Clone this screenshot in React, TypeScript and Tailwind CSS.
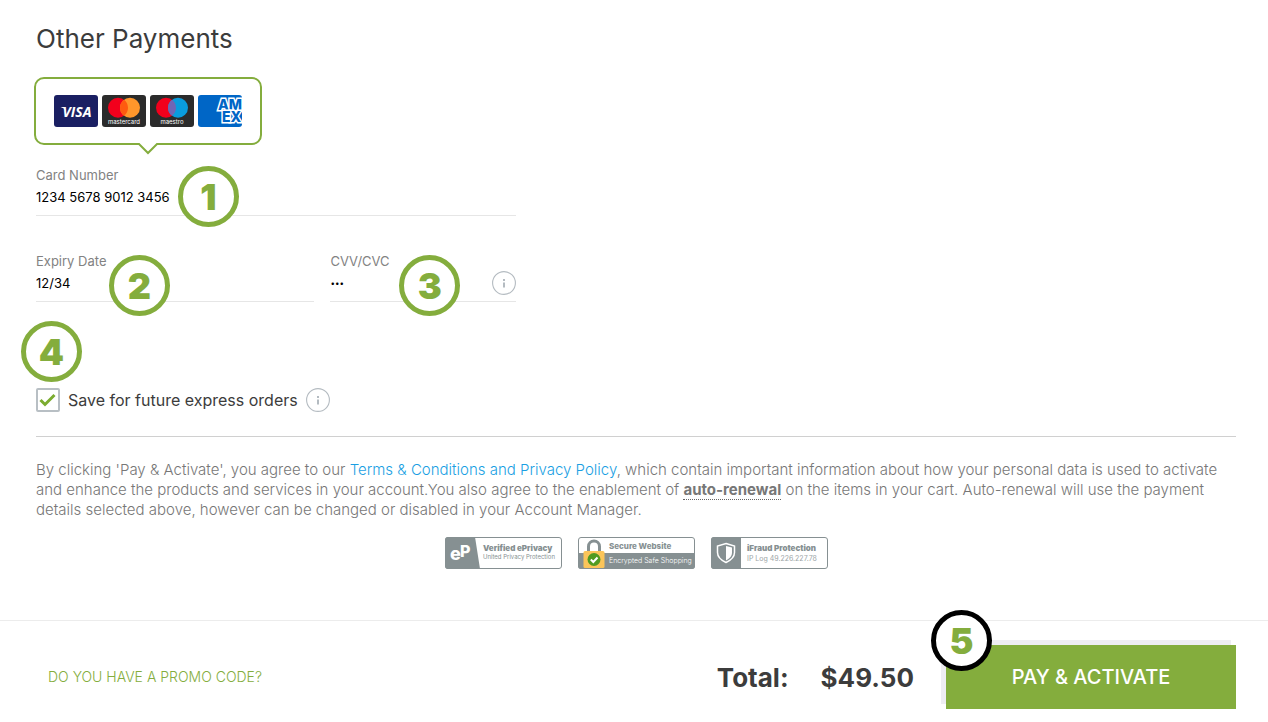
import React from 'react';
import clsx from 'clsx';

interface StepBadgeProps {
  step: number;
  dark?: boolean;
  className?: string;
}

/** Numbered ring that marks a step of the checkout */
const StepBadge: React.FC<StepBadgeProps> = ({ step, dark = false, className }) => (
  <span
    className={clsx(
      'pointer-events-none absolute z-10 flex size-[61px] items-center justify-center rounded-full border-[5px] bg-white text-4xl font-black text-[#84ad3d]',
      dark ? 'border-black' : 'border-[#84ad3d]',
      className
    )}
  >
    {step}
  </span>
);

interface FieldProps {
  id: string;
  label: string;
  value: string;
  type?: string;
  className?: string;
  children?: React.ReactNode;
}

const Field: React.FC<FieldProps> = ({ id, label, value, type = 'text', className, children }) => (
  <div className={clsx('relative', className)}>
    <label htmlFor={id} className="block text-[13px] leading-4 text-[#828282]">
      {label}
    </label>
    <input
      id={id}
      type={type}
      defaultValue={value}
      className={clsx(
        'block h-[33px] w-full border-b border-[#e6e6e6] bg-transparent pb-1 text-black outline-none',
        type === 'password' ? 'text-[8px]' : 'text-[13px]'
      )}
    />
    {children}
  </div>
);

const InfoButton: React.FC<{ label: string; className?: string }> = ({ label, className }) => (
  <button type="button" aria-label={label} className={clsx('size-6 text-[#b4bbc1]', className)}>
    <svg viewBox="0 0 24 24" className="size-6" fill="none">
      <circle cx="12" cy="12" r="11.4" stroke="currentColor" strokeWidth="1.1" />
      <path d="M11 8h2v2h-2zM11 11.5h2v5h-2z" fill="currentColor" />
    </svg>
  </button>
);

const CardLogos = () => (
  <>
    <svg viewBox="0 0 44 32" className="h-8 w-11">
      <rect width="44" height="32" rx="3" fill="#1a1f62" />
      <text x="23" y="22" textAnchor="middle" fontFamily="Open Sans, sans-serif" fontSize="14" fontWeight="700" fontStyle="italic" fill="#fff">
        VISA
      </text>
      <path d="M6.500 12h4l1.500 4q-1.500-3-5.500-4z" fill="#fff" />
    </svg>
    <svg viewBox="0 0 44 32" className="h-8 w-11">
      <rect width="44" height="32" rx="3" fill="#2b2b2b" />
      <circle cx="16" cy="12.700" r="10" fill="#f2001c" />
      <circle cx="28" cy="12.700" r="10" fill="#ff962b" />
      <path d="M22 4.700a10 10 0 0 1 0 16a10 10 0 0 1 0-16z" fill="#ff5a0f" />
      <text x="22" y="29" textAnchor="middle" fontFamily="Inter, sans-serif" fontSize="6" fill="#fff">
        mastercard
      </text>
    </svg>
    <svg viewBox="0 0 44 32" className="h-8 w-11">
      <rect width="44" height="32" rx="3" fill="#2b2b2b" />
      <circle cx="16" cy="12.700" r="10" fill="#f2001c" />
      <circle cx="28" cy="12.700" r="10" fill="#0a9cdd" />
      <path d="M22 4.700a10 10 0 0 1 0 16a10 10 0 0 1 0-16z" fill="#7066b5" />
      <text x="22" y="29" textAnchor="middle" fontFamily="Inter, sans-serif" fontSize="6" fill="#fff">
        maestro
      </text>
    </svg>
    <svg viewBox="0 0 44 32" className="h-8 w-11">
      <defs>
        <clipPath id="amex">
          <rect width="44" height="32" rx="3" />
        </clipPath>
      </defs>
      <g clipPath="url(#amex)" fontFamily="Inter, sans-serif" fontSize="14" fontWeight="800">
        <rect width="44" height="32" fill="#0066c6" />
        <text x="20" y="15" fill="#0066c6" stroke="#fff" strokeWidth="3" paintOrder="stroke">AM</text>
        <text x="24" y="27" fill="#0066c6" stroke="#fff" strokeWidth="3" paintOrder="stroke">EX</text>
      </g>
    </svg>
  </>
);

const PrivacySeal = () => (
  <svg viewBox="0 0 117 32" className="h-8 w-[117px]" fontFamily="Inter, sans-serif">
    <rect x=".5" y=".5" width="116" height="31" rx="2.500" fill="#fff" stroke="#869092" />
    <path d="M3 0h27l5 32H3a3 3 0 0 1-3-3V3a3 3 0 0 1 3-3z" fill="#869092" />
    <text x="5" y="23" fontSize="18" fontWeight="800" fill="#fff">e</text>
    <text x="15" y="20" fontSize="16" fontWeight="800" fill="#fff">P</text>
    <text x="38" y="14" fontSize="8" fontWeight="900" fill="#869092">Verified ePrivacy</text>
    <text x="38" y="22" fontSize="6" fill="#869092">United Privacy Protection</text>
  </svg>
);

const SecureSeal = () => (
  <svg viewBox="0 0 117 32" className="h-8 w-[117px]" fontFamily="Inter, sans-serif">
    <rect x=".5" y=".5" width="116" height="31" rx="2.500" fill="#fff" stroke="#869092" />
    <path d="M0 16h117v13a3 3 0 0 1-3 3H3a3 3 0 0 1-3-3z" fill="#869092" />
    <path d="M10.500 15V9.500a5.500 5.500 0 0 1 11 0V15" fill="none" stroke="#869092" strokeWidth="3" />
    <rect x="5.500" y="14" width="21" height="17" rx="1.500" fill="#fbc55a" />
    <circle cx="16" cy="22.500" r="6.500" fill="#519b22" />
    <path d="m12.800 22.500 2.500 2.500 4.200-4.500" fill="none" stroke="#fff" strokeWidth="2" />
    <text x="31" y="12" fontSize="8" fontWeight="800" fill="#869092">Secure Website</text>
    <text x="31" y="26" fontSize="7" fontWeight="300" fill="#fff">Encrypted Safe Shopping</text>
  </svg>
);

const FraudSeal = () => (
  <svg viewBox="0 0 117 32" className="h-8 w-[117px]" fontFamily="Inter, sans-serif">
    <rect x=".5" y=".5" width="116" height="31" rx="2.500" fill="#fff" stroke="#869092" />
    <path d="M3 0h27v32H3a3 3 0 0 1-3-3V3a3 3 0 0 1 3-3z" fill="#869092" />
    <path d="M15 6.500 23.500 9v6.500q0 6-8.500 10-8.500-4-8.500-10V9z" fill="none" stroke="#fff" strokeWidth="1.500" />
    <path d="M15 9 21 10.500v5.500q0 4-6 7.500z" fill="#fff" />
    <text x="36" y="14" fontSize="8" fontWeight="900" fill="#869092">iFraud Protection</text>
    <text x="36" y="24" fontSize="7" fill="#9da5a7">IP Log 49.226.227.78</text>
  </svg>
);

/**
 * Checkout payment step
 * Card form, terms, trust seals and the order total with its pay button
 */
export default function App() {
  return (
    <div className="bg-white font-['Inter',sans-serif] text-[#3c3c3c]">
      <main className="pt-[23px] pr-8 pl-9">
        <h1 className="text-[26px] leading-8">Other Payments</h1>

        {/* Accepted cards */}
        <div className="relative mt-[22px] -ml-0.5 flex w-fit gap-1 rounded-[10px] border-2 border-[#84ad3d] px-[18px] py-4">
          <CardLogos />
          <svg viewBox="0 0 20 12" className="absolute top-full left-1/2 h-3 w-5 -translate-x-1/2">
            <path d="M0 0h20L10 10z" fill="#fff" />
            <path d="M0 1h1l9 9 9-9h1" fill="none" stroke="#84ad3d" strokeWidth="2" />
          </svg>
        </div>

        {/* Card form */}
        <form className="mt-[22px] w-full max-w-[480px]">
          <Field id="card-number" label="Card Number" value="1234 5678 9012 3456">
            <StepBadge step={1} className="-top-px left-[142px]" />
          </Field>
          <div className="mt-[37px] flex gap-4">
            <Field id="expiry" label="Expiry Date" value="12/34" className="flex-3">
              <StepBadge step={2} className="top-0.5 left-[73px]" />
            </Field>
            <Field id="cvv" label="CVV/CVC" value="123" type="password" className="flex-2">
              <StepBadge step={3} className="top-0.5 left-[69px]" />
              <InfoButton label="About CVV/CVC" className="absolute top-[18px] right-0" />
            </Field>
          </div>
        </form>

        {/* Save card */}
        <div className="relative mt-[86px] flex items-center gap-2">
          <StepBadge step={4} className="-top-[67px] -left-[15px]" />
          <span className="relative size-6">
            <input
              id="save-card"
              type="checkbox"
              defaultChecked
              className="peer block size-6 appearance-none rounded-xs border-2 border-[#b8bfc4]"
            />
            <svg viewBox="0 0 24 24" className="pointer-events-none absolute inset-0 hidden size-6 peer-checked:block">
              <path d="m4.500 12 4.500 4.500L18.500 7" fill="none" stroke="#7bac2f" strokeWidth="3" />
            </svg>
          </span>
          <label htmlFor="save-card" className="text-base leading-6">
            Save for future express orders
          </label>
          <InfoButton label="About saved cards" />
        </div>

        {/* Terms */}
        <hr className="mt-6 border-[#d0d0d0]" />
        <p className="mt-[23px] text-[15px] leading-5 font-light text-[#777]">
          By clicking 'Pay &amp; Activate', you agree to our{' '}
          <a href="#terms" className="text-[#1a9fe3]">
            Terms &amp; Conditions and Privacy Policy
          </a>
          , which contain important information about how your personal data is used to activate and enhance the
          products and services in your account.You also agree to the enablement of{' '}
          <strong className="border-b border-dotted border-[#666] font-bold">auto-renewal</strong> on the items in your
          cart. Auto-renewal will use the payment details selected above, however can be changed or disabled in your
          Account Manager.
        </p>

        {/* Trust seals */}
        <div className="mt-[17px] flex justify-center gap-4">
          <PrivacySeal />
          <SecureSeal />
          <FraudSeal />
        </div>
      </main>

      {/* Order total */}
      <footer className="mt-[51px] flex items-center justify-between border-t border-[#ececec] pt-6 pr-8 pb-3 pl-12">
        <a href="#promo" className="text-sm font-light text-[#84ad3d]">
          DO YOU HAVE A PROMO CODE?
        </a>
        <div className="flex items-center gap-8 text-[26px] font-bold">
          <span>Total:</span>
          <span>$49.50</span>
          <div className="relative">
            <button
              type="button"
              className="block h-16 w-[290px] bg-[#84ad3d] text-xl font-medium text-white shadow-[-5px_-5px_0_#eeedf2]"
            >
              PAY &amp; ACTIVATE
            </button>
            <StepBadge step={5} dark className="-top-[35px] -left-[15px]" />
          </div>
        </div>
      </footer>
    </div>
  );
}
